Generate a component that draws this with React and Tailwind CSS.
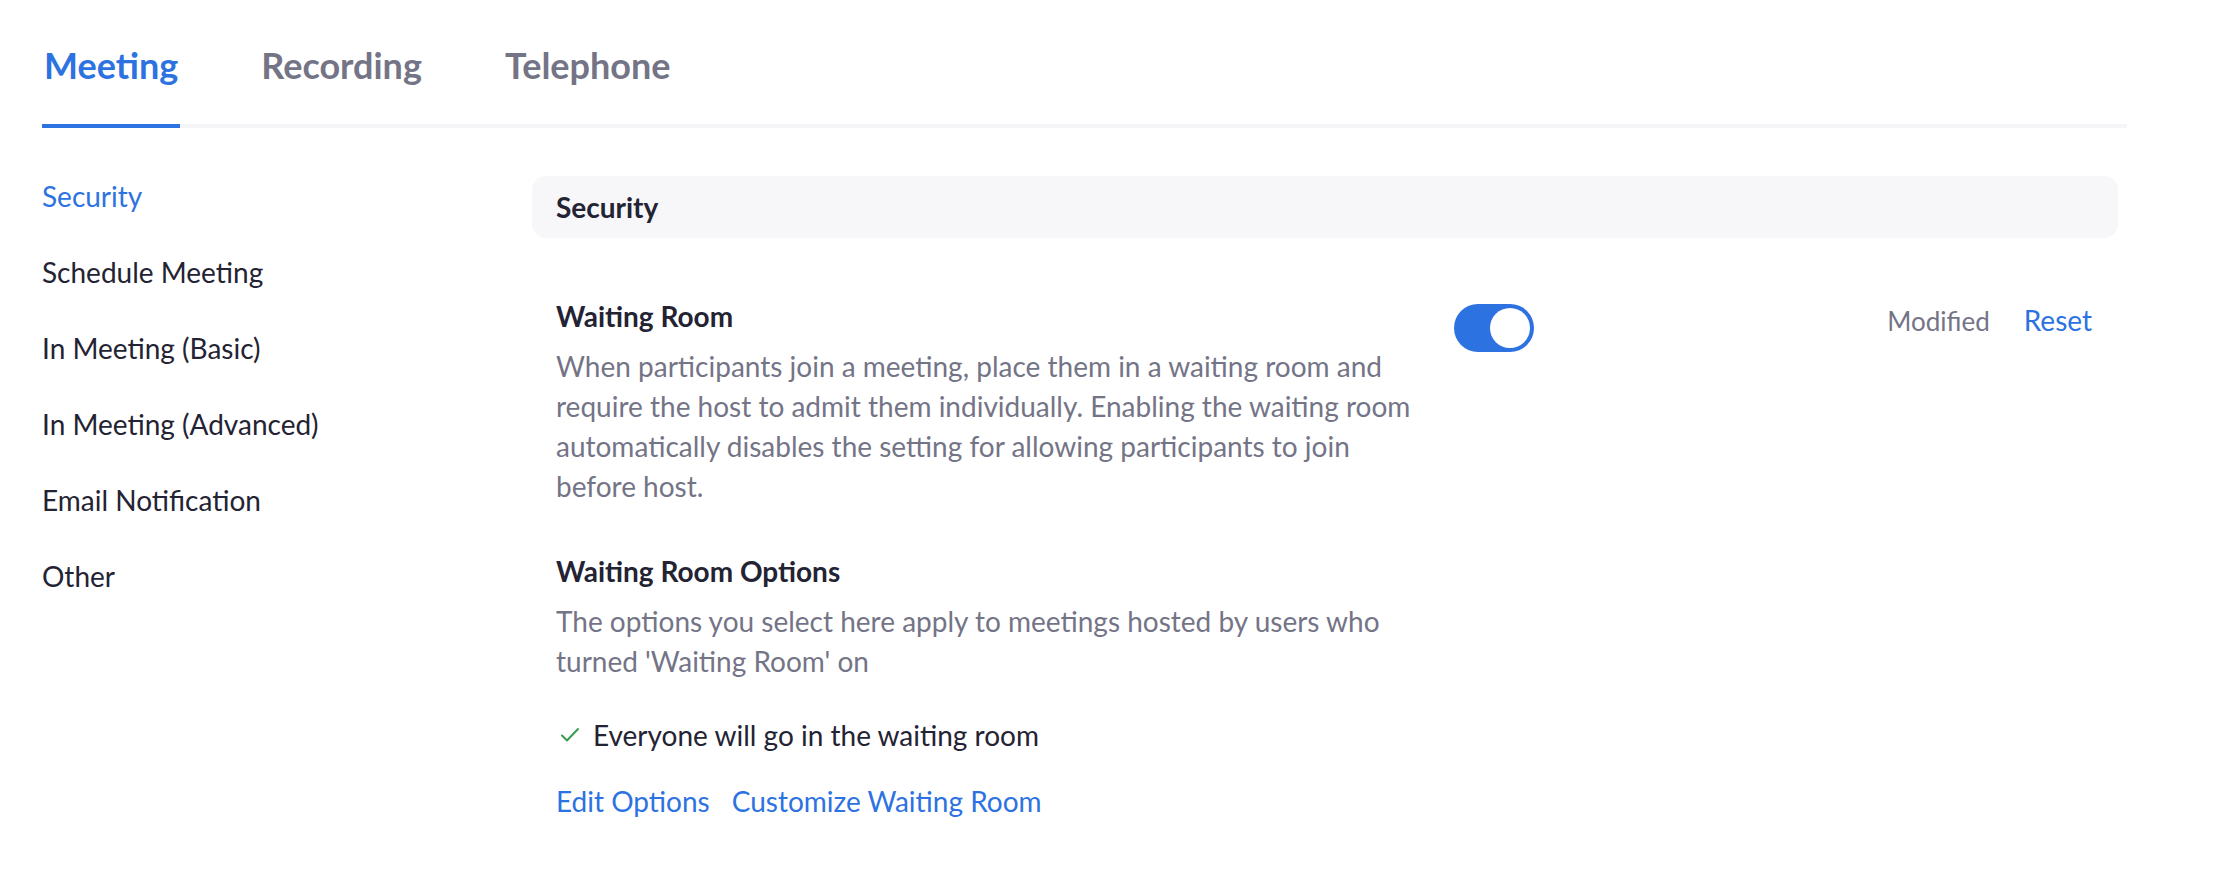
import React from 'react'

const sideItems = [
  'Security',
  'Schedule Meeting',
  'In Meeting (Basic)',
  'In Meeting (Advanced)',
  'Email Notification',
  'Other',
]

function Toggle() {
  return (
    <div className="w-[80px] h-[48px] rounded-full bg-[#2d72e1] flex items-center justify-end p-[4px] shrink-0">
      <div className="w-[40px] h-[40px] rounded-full bg-white" />
    </div>
  )
}

export default function App() {
  return (
    <div className="w-full h-[892px] bg-white font-['Lato',sans-serif] text-[#232333] overflow-hidden">
      {/* Tabs */}
      <div className="pt-[43px] pl-[42px]">
        <div className="w-[2085px] flex gap-[79px] border-b-4 border-[#f5f5f7]">
          <div className="px-[2px] pb-[37px] -mb-1 border-b-4 border-[#2d72e1] rounded-t-[2px] text-[36px] leading-[44px] font-bold text-[#2d72e1]">
            Meeting
          </div>
          <div className="px-[2px] pb-[37px] text-[36px] leading-[44px] font-bold text-[#747487]">Recording</div>
          <div className="px-[2px] pb-[37px] text-[36px] leading-[44px] font-bold text-[#747487]">Telephone</div>
        </div>
      </div>

      <div className="flex pl-[42px] pt-[48px]">
        {/* Sidebar */}
        <div className="w-[490px] shrink-0 flex flex-col gap-[40px] pt-[2px]">
          {sideItems.map((item, i) => (
            <div
              key={item}
              className={`text-[28px] leading-[36px] ${i === 0 ? 'text-[#2d72e1]' : 'text-[#232333]'}`}
            >
              {item}
            </div>
          ))}
        </div>

        {/* Main */}
        <div className="w-[1586px] shrink-0">
          <div className="h-[62px] rounded-[14px] bg-[#f7f7f9] px-[24px] flex items-center">
            <span className="text-[28px] font-bold">Security</span>
          </div>

          <div className="flex items-start pl-[24px] pr-[26px] mt-[58px]">
            <div className="w-[898px] shrink-0">
              <div className="text-[28px] leading-[40px] font-bold">Waiting Room</div>
              <div className="mt-[10px] text-[28px] leading-[40px] text-[#747487] pr-[20px]">
                When participants join a meeting, place them in a waiting room and require the host to admit them
                individually. Enabling the waiting room automatically disables the setting for allowing participants
                to join before host.
              </div>

              <div className="mt-[45px] text-[28px] leading-[40px] font-bold">Waiting Room Options</div>
              <div className="mt-[10px] text-[28px] leading-[40px] text-[#747487] pr-[20px]">
                The options you select here apply to meetings hosted by users who turned 'Waiting Room' on
              </div>

              <div className="mt-[34px] flex items-center gap-[13px] text-[28px] leading-[40px]">
                <svg width="20" height="16" viewBox="0 0 20 16" fill="none" className="ml-[4px]">
                  <path d="M2 8.5 L7 13.5 L18 2" stroke="#3a9b4f" strokeWidth="2" strokeLinecap="round" strokeLinejoin="round" />
                </svg>
                <span>Everyone will go in the waiting room</span>
              </div>

              <div className="mt-[26px] flex gap-[22px] text-[28px] leading-[40px] text-[#2d72e1]">
                <a href="#edit">Edit Options</a>
                <a href="#customize">Customize Waiting Room</a>
              </div>
            </div>

            <div className="mt-[8px]">
              <Toggle />
            </div>

            <div className="ml-auto mt-[4px] flex items-baseline gap-[34px] leading-[40px]">
              <span className="text-[26px] text-[#747487]">Modified</span>
              <a href="#reset" className="text-[28px] text-[#2d72e1]">Reset</a>
            </div>
          </div>
        </div>
      </div>
    </div>
  )
}
